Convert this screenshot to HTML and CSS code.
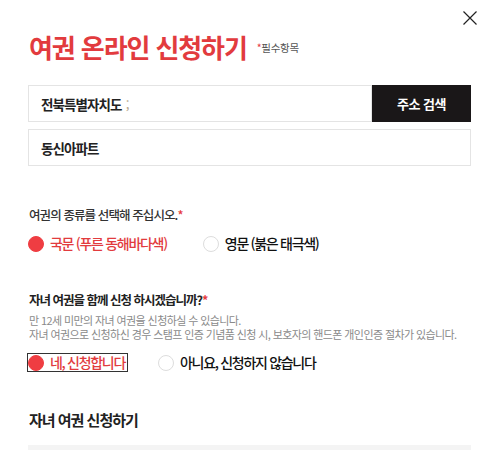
FILE: index.html
```html
<!DOCTYPE html>
<html lang="ko">

<head>
    <meta charset="UTF-8">
    <meta name="viewport" content="width=device-width, initial-scale=1.0">
    <title>여권 온라인 신청하기</title>
    <link rel="stylesheet" href="styles.css">
</head>

<body>

    <div class="modal">

        <!-- Close -->
        <div class="top-bar">
            <button class="close-btn" aria-label="닫기">
                <svg width="14" height="14" viewBox="0 0 14 14">
                    <path d="M0.5 0.5 L13.5 13.5 M13.5 0.5 L0.5 13.5" stroke="#222" stroke-width="1.2" fill="none" />
                </svg>
            </button>
        </div>

        <!-- Title -->
        <h1 class="title">여권 온라인 신청하기 <span class="required-note"><em>*</em>필수항목</span></h1>

        <!-- Address -->
        <div class="addr-row">
            <div class="field">전북특별자치도 <span class="caret">;</span></div>
            <button class="search-btn">주소 검색</button>
        </div>
        <div class="field field-full">동신아파트</div>

        <!-- Passport type -->
        <p class="question">여권의 종류를 선택해 주십시오.<em>*</em></p>
        <div class="radio-row">
            <label class="radio checked"><span class="dot"></span>국문 (푸른 동해바다색)</label>
            <label class="radio"><span class="dot"></span>영문 (붉은 태극색)</label>
        </div>

        <!-- Child passport -->
        <p class="question question-bold">자녀 여권을 함께 신청 하시겠습니까?<em>*</em></p>
        <p class="help">만 12세 미만의 자녀 여권을 신청하실 수 있습니다.<br>자녀 여권으로 신청하신 경우 스탬프 인증 기념품 신청 시, 보호자의 핸드폰 개인인증 절차가 있습니다.</p>
        <div class="radio-row radio-row-child">
            <label class="radio checked focused"><span class="dot"></span>네, 신청합니다</label>
            <label class="radio"><span class="dot"></span>아니요, 신청하지 않습니다</label>
        </div>

        <h2 class="section-title">자녀 여권 신청하기</h2>
        <div class="section-bar"></div>

    </div>

</body>

</html>
```

FILE: styles.css
```css
html * {
    font-family: "Noto Sans CJK KR", "Noto Sans", sans-serif;
}

body {
    margin: 0;
    background: #fff;
    color: #222;
}

.modal {
    padding: 0 29px 0 28px;
}

em {
    font-style: normal;
    color: #e63b3f;
}

/* Top bar */
.top-bar {
    display: flex;
    justify-content: flex-end;
    padding-top: 11px;
    margin-right: -6px;
}

.close-btn {
    border: 0;
    background: none;
    padding: 0;
    width: 14px;
    height: 14px;
    display: flex;
}

/* Title */
.title {
    margin: 4px 0 0 1px;
    font-size: 26px;
    font-weight: 700;
    color: #e23b3e;
    letter-spacing: -1.1px;
    line-height: 34px;
    display: flex;
    align-items: center;
}

.required-note {
    font-size: 10.5px;
    font-weight: 400;
    color: #555;
    letter-spacing: -0.3px;
    margin-left: 10px;
    padding-top: 2px;
}

/* Address fields */
.addr-row {
    display: flex;
    margin-top: 20px;
    height: 37px;
}

.field {
    flex: 1;
    border: 1px solid #e4e4e4;
    display: flex;
    align-items: center;
    padding-left: 12px;
    font-size: 13.5px;
    font-weight: 700;
    color: #222;
    letter-spacing: -0.9px;
}

.caret {
    color: #b9a890;
    font-weight: 400;
    margin-left: 4px;
}

.field-full {
    height: 35px;
    margin-top: 7px;
    flex: none;
}

.search-btn {
    width: 99px;
    border: 0;
    background: #1a1718;
    color: #fff;
    font-size: 13px;
    font-weight: 700;
    letter-spacing: -0.5px;
}

/* Questions */
.question {
    margin: 40px 0 0 1px;
    font-size: 12.5px;
    font-weight: 500;
    color: #333;
    letter-spacing: -0.9px;
    line-height: 18px;
}

.question-bold {
    margin-top: 39px;
    font-weight: 700;
    color: #222;
    letter-spacing: -1px;
}

.help {
    margin: 4px 0 0 1px;
    font-size: 11px;
    color: #8a8a8a;
    line-height: 14px;
    letter-spacing: -0.6px;
    white-space: nowrap;
}

/* Radios */
.radio-row {
    display: flex;
    gap: 36px;
    margin-top: 11px;
}

.radio-row-child {
    margin-top: 13px;
    gap: 31px;
}

.radio {
    display: flex;
    align-items: center;
    gap: 6px;
    font-size: 14px;
    font-weight: 500;
    color: #111;
    letter-spacing: -1.3px;
    line-height: 17px;
}

.radio.checked {
    color: #e23b3e;
}

.dot {
    width: 14px;
    height: 14px;
    border-radius: 50%;
    border: 1px solid #ddd;
    background: #fff;
}

.radio.checked .dot {
    background: #ef3d42;
    border-color: #ef3d42;
}

.focused {
    outline: 1px solid #333;
    padding-right: 2px;
}

/* Child section */
.section-title {
    margin: 38px 0 0 1px;
    font-size: 15px;
    font-weight: 700;
    color: #222;
    letter-spacing: -1px;
    line-height: 22px;
}

.section-bar {
    margin-top: 14px;
    height: 5px;
    background: #f4f4f4;
}
```
